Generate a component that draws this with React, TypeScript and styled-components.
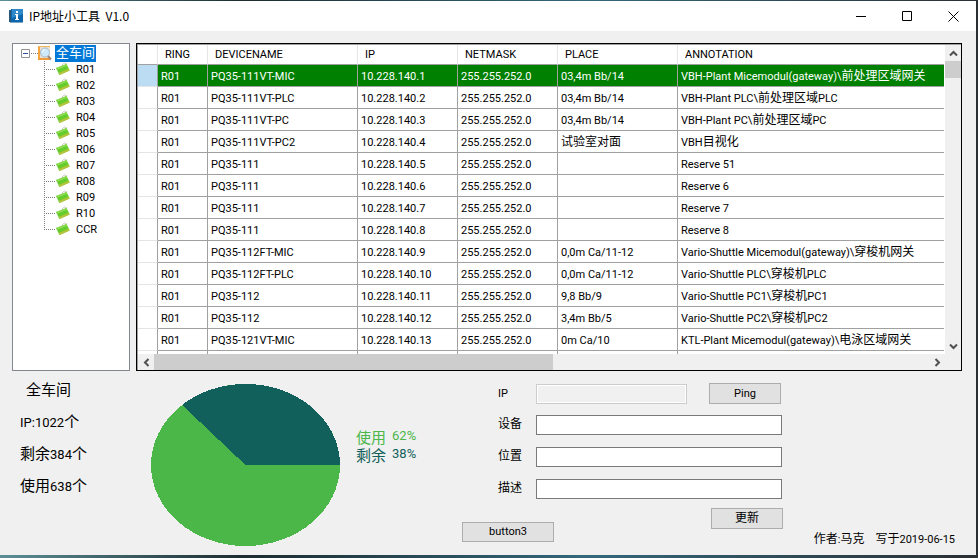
import React from "react";
import styled, { createGlobalStyle } from "styled-components";

const GlobalStyle = createGlobalStyle`
  *, *::before, *::after {
    box-sizing: border-box;
  }

  body {
    margin: 0;
    color: #000;
    font-family: Roboto, "Noto Sans CJK SC", sans-serif;
    font-size: 11px;
    line-height: 16px;
  }

  button, input {
    font: inherit;
    color: inherit;
  }
`;

const NODES = ["R01", "R02", "R03", "R04", "R05", "R06", "R07", "R08", "R09", "R10", "CCR"];

const HEADERS = ["RING", "DEVICENAME", "IP", "NETMASK", "PLACE", "ANNOTATION"];

const WIDTHS = [20, 50, 150, 100, 100, 120];

const ROWS = [
  ["PQ35-111VT-MIC", "03,4m Bb/14", "VBH-Plant Micemodul(gateway)\\前处理区域网关"],
  ["PQ35-111VT-PLC", "03,4m Bb/14", "VBH-Plant PLC\\前处理区域PLC"],
  ["PQ35-111VT-PC", "03,4m Bb/14", "VBH-Plant PC\\前处理区域PC"],
  ["PQ35-111VT-PC2", "试验室对面", "VBH目视化"],
  ["PQ35-111", "", "Reserve 51"],
  ["PQ35-111", "", "Reserve 6"],
  ["PQ35-111", "", "Reserve 7"],
  ["PQ35-111", "", "Reserve 8"],
  ["PQ35-112FT-MIC", "0,0m Ca/11-12", "Vario-Shuttle Micemodul(gateway)\\穿梭机网关"],
  ["PQ35-112FT-PLC", "0,0m Ca/11-12", "Vario-Shuttle PLC\\穿梭机PLC"],
  ["PQ35-112", "9,8 Bb/9", "Vario-Shuttle PC1\\穿梭机PC1"],
  ["PQ35-112", "3,4m Bb/5", "Vario-Shuttle PC2\\穿梭机PC2"],
  ["PQ35-121VT-MIC", "0m Ca/10", "KTL-Plant Micemodul(gateway)\\电泳区域网关"],
];

const Desktop = styled.div`
  display: flex;
  min-height: 100vh;
  padding: 1px 2px 3px 0;
  background: linear-gradient(90deg, #5b8f96, #1c2c30 25%, #33687c 60%, #2a2f33);
`;

const Window = styled.main`
  flex: 1;
  min-width: 0;
  display: flex;
  flex-direction: column;
  background: #f0f0f0;
`;

const TitleBar = styled.header`
  display: flex;
  align-items: center;
  height: 30px;
  padding-left: 9px;
  background: #fff;
`;

const Title = styled.h1`
  flex: 1;
  margin: 0 0 0 6px;
  font-family: "Noto Sans CJK SC", sans-serif;
  font-size: 12px;
  font-weight: 400;
  white-space: pre;
`;

const CaptionButton = styled.button`
  display: flex;
  align-items: center;
  justify-content: center;
  width: 46px;
  height: 30px;
  padding: 0;
  border: 0;
  background: none;
`;

const Content = styled.div`
  flex: 1;
  display: flex;
  flex-direction: column;
  gap: 4px;
  padding: 12px 14px 7px 12px;
`;

const Panels = styled.section`
  display: flex;
  gap: 6px;
`;

const Tree = styled.nav`
  width: 118px;
  padding: 1px 0 0 8px;
  border: 1px solid #828790;
  background: #fff;
`;

const RootNode = styled.div`
  display: flex;
  align-items: center;
  height: 16px;
`;

const NodeList = styled.ul`
  margin: 0 0 0 23px;
  padding: 0;
  list-style: none;
`;

const Node = styled.li`
  display: flex;
  align-items: center;
  height: 16px;

  &::before {
    content: "";
    align-self: stretch;
    width: 12px;
    background:
      repeating-linear-gradient(90deg, #808080 0 1px, transparent 1px 2px) 0 8px / 12px 1px no-repeat,
      repeating-linear-gradient(#808080 0 1px, transparent 1px 2px) 0 0 / 1px 100% no-repeat;
  }

  &:last-child::before {
    background:
      repeating-linear-gradient(90deg, #808080 0 1px, transparent 1px 2px) 0 8px / 12px 1px no-repeat,
      repeating-linear-gradient(#808080 0 1px, transparent 1px 2px) 0 0 / 1px 8px no-repeat;
  }
`;

const Dots = styled.span`
  width: 7px;
  height: 1px;
  margin-left: 1px;
  background: repeating-linear-gradient(90deg, #808080 0 1px, transparent 1px 2px);
`;

const NodeLabel = styled.span<{ $selected?: boolean }>`
  margin-left: ${(props) => (props.$selected ? "3px" : "5px")};
  padding: ${(props) => (props.$selected ? "0 1px" : "2px 1px 0")};
  color: ${(props) => (props.$selected ? "#fff" : "#000")};
  background: ${(props) => (props.$selected ? "#0078d7" : "none")};
`;

const GridFrame = styled.div`
  flex: 1;
  min-width: 0;
  display: grid;
  grid-template-columns: minmax(0, 1fr) 16px;
  grid-template-rows: 309px 16px;
  border: 1px solid #000;
  box-shadow: inset 1px 1px 0 #a0a0a0;
  padding: 1px 0 0 1px;
`;

const Viewport = styled.div`
  overflow: hidden;
  padding-right: 1px;
  background: #fff;
`;

const Table = styled.table`
  width: 100%;
  table-layout: fixed;
  border-collapse: separate;
  border-spacing: 0;
  white-space: nowrap;
`;

const HeadCell = styled.th`
  height: 20px;
  padding: 1px 0 0 7px;
  border-right: 1px solid #e5e5e5;
  border-bottom: 1px solid #a0a0a0;
  font-weight: 400;
  text-align: left;

  &:last-child {
    border-right: 0;
  }
`;

const Cell = styled.td<{ $selected?: boolean }>`
  height: 22px;
  padding: 2px 0 0 3px;
  overflow: hidden;
  border-right: 1px solid #a0a0a0;
  border-bottom: 1px solid #a0a0a0;
  color: ${(props) => (props.$selected ? "#fff" : "#000")};
  background: ${(props) => (props.$selected ? "#008000" : "#fff")};

  &:last-child {
    border-right: 0;
  }
`;

const RowHead = styled.td<{ $selected?: boolean }>`
  border-right: 1px solid #a0a0a0;
  border-bottom: 1px solid #e5e5e5;
  background: ${(props) => (props.$selected ? "#bcdcf4" : "#fff")};
`;

const ScrollBar = styled.div<{ $vertical?: boolean }>`
  display: flex;
  flex-direction: ${(props) => (props.$vertical ? "column" : "row")};
  background: #f0f0f0;
`;

const ScrollArrow = styled.button`
  flex: none;
  display: flex;
  align-items: center;
  justify-content: center;
  width: 16px;
  height: 16px;
  padding: 0;
  border: 0;
  background: none;
`;

const Track = styled.div`
  flex: 1;
`;

const Thumb = styled.div<{ $size: string }>`
  flex: 0 0 ${(props) => props.$size};
  background: #cdcdcd;
`;

const Details = styled.section`
  flex: 1;
  display: flex;
`;

const Stats = styled.ul`
  width: 139px;
  margin: 0;
  padding: 0 0 0 8px;
  list-style: none;
  font-size: 13px;
  line-height: 32px;
`;

const Stat = styled.li<{ $title?: boolean }>`
  padding-left: ${(props) => (props.$title ? "6px" : "0")};
`;

const Chart = styled.figure`
  display: flex;
  align-items: flex-start;
  gap: 16px;
  width: 311px;
  margin: 0;
  padding-top: 9px;
`;

const Legend = styled.figcaption`
  padding-top: 43px;
  font-size: 13px;
  line-height: 18px;
`;

const LegendItem = styled.div<{ $color: string }>`
  display: flex;
  align-items: center;
  gap: 6px;
  height: 18px;
  color: ${(props) => props.$color};
`;

const Form = styled.form`
  display: flex;
  flex-direction: column;
  gap: 12px;
  width: 321px;
  padding-top: 8px;
`;

const Field = styled.div`
  display: grid;
  grid-template-columns: 38px 151px 1fr;
  align-items: center;
  height: 20px;
  padding-left: 36px;
`;

const Input = styled.input`
  grid-column: 2 / -1;
  width: 246px;
  height: 20px;
  padding: 0 4px;
  border: 1px solid #7a7a7a;
  border-radius: 0;
  background: #fff;

  &:disabled {
    grid-column: 2;
    width: 151px;
    border-color: #ccc;
    background: #f0f0f0;
    box-shadow: inset 0 0 0 1px #fff;
  }
`;

const Button = styled.button<{ $wide?: boolean }>`
  width: ${(props) => (props.$wide ? "92px" : "72px")};
  height: ${(props) => (props.$wide ? "20px" : "21px")};
  padding: 0;
  border: 1px solid #adadad;
  background: #e1e1e1;
`;

const PingSlot = styled.div`
  display: flex;
  justify-content: flex-end;
  padding-right: 2px;
`;

const Actions = styled.div`
  display: flex;
  justify-content: space-between;
  align-items: flex-end;
  height: 34px;
  margin-top: -3px;
`;

const UpdateSlot = styled.div`
  align-self: flex-start;
  display: flex;
`;

const Credit = styled.p`
  flex: 1;
  align-self: flex-end;
  margin: 0;
  padding-right: 7px;
  text-align: right;
  white-space: pre;
`;

// chinese glyphs are set in their own size next to the smaller latin ones
const Zh = styled.span<{ $size: number }>`
  font-family: "Noto Sans CJK SC", sans-serif;
  font-size: ${(props) => props.$size + "px"};
  line-height: 1;
`;

const Text = ({ children, size = 12 }: { children: string; size?: number }) => (
  <>
    {children.split(/([\u4e00-\u9fff]+)/).map((part, i) =>
      i % 2 ? (
        <Zh key={i} $size={size}>
          {part}
        </Zh>
      ) : (
        part
      )
    )}
  </>
);

const AppIcon = () => (
  <svg width="14" height="14" viewBox="0 0 14 14">
    <path d="M0 1h3v12H0z" fill="#2c5878" />
    <path d="M2 0h12v13H2z" fill="#0b66ad" />
    <path d="M3 0h11v5L3 9z" fill="#2f88c8" />
    <path d="M7 2h2v2H7zM6 5h3v5h1v1H6v-1h1V6H6z" fill="#fff" />
    <path d="M1 13h13v1H1z" fill="#7fa6c4" />
  </svg>
);

const ExpandIcon = () => (
  <svg width="9" height="9" viewBox="0 0 9 9">
    <path d="M.5.5h8v8h-8z" fill="#fff" stroke="#919191" />
    <path d="M2 4.500h5" stroke="#2b4f9e" />
  </svg>
);

const SearchIcon = () => (
  <svg width="14" height="16" viewBox="0 0 14 16">
    <path d="M0 1h12v14H0z" fill="#f5a63c" />
    <path d="M2 1h10v12H2z" fill="#e9e2d4" />
    <path d="M0 1h12v1H0z" fill="#f3b55e" />
    <path d="M0 13h12v2H0z" fill="#f09a3a" />
    <path d="m9.500 10.500 3.500 4" stroke="#a08878" strokeWidth="2" />
    <circle cx="7" cy="7.500" r="4.500" fill="#cfeafa" stroke="#a9b9cc" />
    <path d="M4.500 7A2.500 2.500 0 0 1 7 4.500" stroke="#fff" fill="none" />
  </svg>
);

const ChipIcon = () => (
  <svg width="14" height="14" viewBox="0 0 14 14">
    <path d="M5.500 3.500 8.500 1l2.500.8" stroke="#c9d2c2" fill="none" />
    <path d="M0 6 10.500 2l3.200 6.500L3.500 13z" fill="#66cc2e" />
    <path d="m0 6 10.500-4 .8 1.700L1 7.800z" fill="#8cda55" />
    <path d="m2.600 11 10.200-4.200.9 1.700L3.500 13z" fill="#b6c43a" />
  </svg>
);

const Arrow = ({ d }: { d: string }) => (
  <svg width="9" height="9" viewBox="0 0 9 9">
    <path d={d} fill="none" stroke="#505050" strokeWidth="2" />
  </svg>
);

const Pie = () => (
  <svg width="189" height="162" viewBox="0 0 189 162" shapeRendering="crispEdges">
    <ellipse cx="94.500" cy="81" rx="94.500" ry="81" fill="#4ab748" />
    <path d="M94.500 81H189A94.500 81 0 0 0 31 21Z" fill="#12605b" />
  </svg>
);

const TreeView = () => (
  <Tree>
    <RootNode>
      <ExpandIcon />
      <Dots />
      <SearchIcon />
      <NodeLabel $selected>
        <Text size={13}>全车间</Text>
      </NodeLabel>
    </RootNode>
    <NodeList>
      {NODES.map((name) => (
        <Node key={name}>
          <ChipIcon />
          <NodeLabel>{name}</NodeLabel>
        </Node>
      ))}
    </NodeList>
  </Tree>
);

const AddressGrid = () => (
  <GridFrame>
    <Viewport>
      <Table>
        <colgroup>
          {WIDTHS.map((width, i) => (
            <col key={i} width={width} />
          ))}
          <col />
        </colgroup>
        <thead>
          <tr>
            <HeadCell />
            {HEADERS.map((header) => (
              <HeadCell key={header}>{header}</HeadCell>
            ))}
          </tr>
        </thead>
        <tbody>
          {ROWS.map(([device, place, annotation], i) => (
            <tr key={i}>
              <RowHead $selected={i === 0} />
              {["R01", device, `10.228.140.${i + 1}`, "255.255.252.0", place, annotation].map(
                (value, j) => (
                  <Cell key={j} $selected={i === 0}>
                    <Text>{value}</Text>
                  </Cell>
                )
              )}
            </tr>
          ))}
          <tr>
            <RowHead />
            {HEADERS.map((header) => (
              <Cell key={header} />
            ))}
          </tr>
        </tbody>
      </Table>
    </Viewport>
    <ScrollBar $vertical>
      <ScrollArrow aria-label="Up">
        <Arrow d="M1 6.500 4.500 3 8 6.500" />
      </ScrollArrow>
      <Thumb $size="17px" />
      <Track />
      <ScrollArrow aria-label="Down">
        <Arrow d="M1 2.500 4.500 6 8 2.500" />
      </ScrollArrow>
    </ScrollBar>
    <ScrollBar>
      <ScrollArrow aria-label="Left">
        <Arrow d="M6.500 1 3 4.500 6.500 8" />
      </ScrollArrow>
      <Thumb $size="399px" />
      <Track />
      <ScrollArrow aria-label="Right">
        <Arrow d="M2.500 1 6 4.500 2.500 8" />
      </ScrollArrow>
    </ScrollBar>
  </GridFrame>
);

const EditForm = () => (
  <Form onSubmit={(e) => e.preventDefault()}>
    <Field>
      <label htmlFor="ip">IP</label>
      <Input id="ip" disabled />
      <PingSlot>
        <Button type="button">Ping</Button>
      </PingSlot>
    </Field>
    <Field>
      <label htmlFor="device">
        <Text>设备</Text>
      </label>
      <Input id="device" />
    </Field>
    <Field>
      <label htmlFor="place">
        <Text>位置</Text>
      </label>
      <Input id="place" />
    </Field>
    <Field>
      <label htmlFor="annotation">
        <Text>描述</Text>
      </label>
      <Input id="annotation" />
    </Field>
    <Actions>
      <Button type="button" $wide>
        button3
      </Button>
      <UpdateSlot>
        <Button type="submit">
          <Text>更新</Text>
        </Button>
      </UpdateSlot>
    </Actions>
  </Form>
);

const App = () => (
  <Desktop>
    <GlobalStyle />
    <Window>
      <TitleBar>
        <AppIcon />
        <Title>IP地址小工具  V1.0</Title>
        <CaptionButton aria-label="Minimize">
          <svg width="11" height="11" viewBox="0 0 11 11">
            <path d="M0 5.500h10" stroke="#000" />
          </svg>
        </CaptionButton>
        <CaptionButton aria-label="Maximize">
          <svg width="11" height="11" viewBox="0 0 11 11">
            <path d="M.5.5h9v9h-9z" fill="none" stroke="#000" />
          </svg>
        </CaptionButton>
        <CaptionButton aria-label="Close">
          <svg width="11" height="11" viewBox="0 0 11 11">
            <path d="m.5.5 10 10m0-10-10 10" stroke="#000" />
          </svg>
        </CaptionButton>
      </TitleBar>
      <Content>
        <Panels>
          <TreeView />
          <AddressGrid />
        </Panels>
        <Details>
          <Stats>
            <Stat $title>
              <Text size={15}>全车间</Text>
            </Stat>
            <Stat>
              <Text size={15}>IP:1022个</Text>
            </Stat>
            <Stat>
              <Text size={15}>剩余384个</Text>
            </Stat>
            <Stat>
              <Text size={15}>使用638个</Text>
            </Stat>
          </Stats>
          <Chart>
            <Pie />
            <Legend>
              <LegendItem $color="#4ab748">
                <Text size={15}>使用</Text>
                <span>62%</span>
              </LegendItem>
              <LegendItem $color="#12605b">
                <Text size={15}>剩余</Text>
                <span>38%</span>
              </LegendItem>
            </Legend>
          </Chart>
          <EditForm />
          <Credit>
            <Text>作者:马克    写于2019-06-15</Text>
          </Credit>
        </Details>
      </Content>
    </Window>
  </Desktop>
);

export default App;
